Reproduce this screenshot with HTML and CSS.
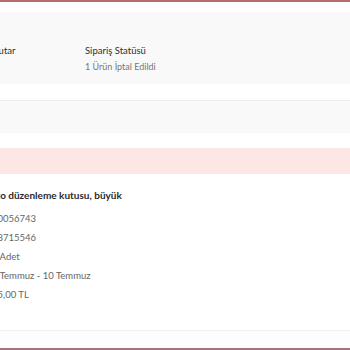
FILE: index.html
```html
<!DOCTYPE html>
<html lang="tr">
	<head>
	<meta charset="utf-8">
	<title>Sipariş Detayı</title>
	<link rel="stylesheet" href="styles.css">
	</head>

	<body>
	<div class="topline"></div>

	<!-- Order summary -->
	<div class="summary">
		<div class="col col-amount">
			<div class="label">Tutar</div>
			<div class="value">&nbsp;</div>
		</div>
		<div class="col">
			<div class="label">Sipariş Statüsü</div>
			<div class="value">1 Ürün İptal Edildi</div>
		</div>
	</div>

	<div class="bar"></div>
	<div class="alert"></div>

	<!-- Item -->
	<div class="item">
		<div class="title">Akrilik foto düzenleme kutusu, büyük</div>
		<div class="line">40056743</div>
		<div class="line">83715546</div>
		<div class="line">1 Adet</div>
		<div class="line">5 Temmuz - 10 Temmuz</div>
		<div class="line">15,00 TL</div>
	</div>

	<div class="footer"></div>
	</body>
</html>
```
FILE: styles.css
```css
body {
	margin: 0;
	width: 350px;
	height: 350px;
	overflow: hidden;
	background: #fff;
	font: normal 9px Lato, "Open Sans", sans-serif;
	color: #333;
}

.topline {
	height: 2px;
	background: #b26f70;
}

.summary {
	display: flex;
	align-items: flex-start;
	box-sizing: border-box;
	margin-top: 10px;
	padding-top: 33px;
	height: 72px;
	background: #f9f9f9;
}

.col {
	display: flex;
	flex-direction: column;
	gap: 5px;
}

.col-amount {
	margin-left: -6px;
	width: 91px;
}

.label {
	color: #2e2e2e;
	font-size: 9.5px;
}

.value {
	color: #777;
}

.bar {
	margin-top: 16px;
	height: 32px;
	border-top: 1px solid #eee;
	background: #f9f9f9;
}

.alert {
	margin-top: 15px;
	height: 26px;
	background: #fde7e5;
}

.item {
	display: flex;
	flex-direction: column;
	gap: 6px;
	padding: 15px 0 0 0;
	margin-left: -8px;
	height: 156px;
	box-sizing: border-box;
}

.title {
	margin-left: -36px;
	margin-bottom: 5px;
	font-size: 10px;
	font-weight: 700;
	color: #2a2a2a;
}

.line {
	color: #666;
	font-size: 9.5px;
	line-height: 13px;
}

.footer {
	height: 17px;
	border-top: 1px solid #f0f0f0;
	border-bottom: 2px solid #a86f7e;
	background: #fdfdfd;
}
```
